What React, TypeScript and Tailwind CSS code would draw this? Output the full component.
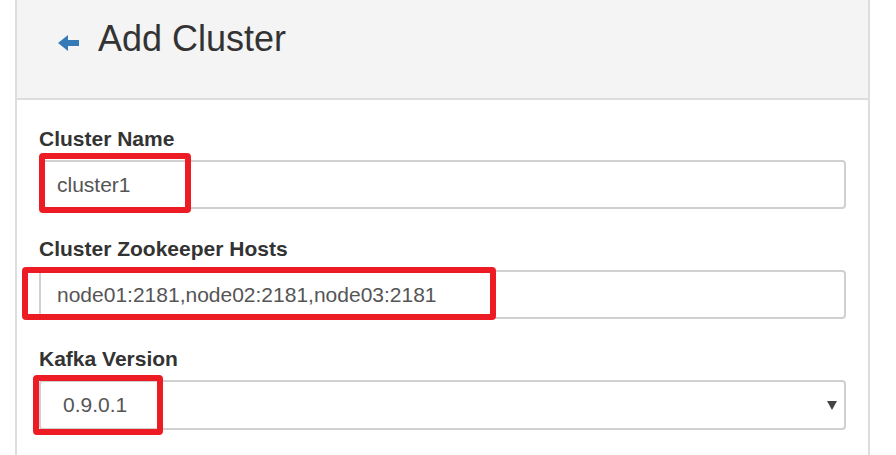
import React from "react";

const fields = [
  {
    label: "Cluster Name",
    value: "cluster1",
    mark: "left-0 top-[-7px] w-[152px] h-[60px]",
  },
  {
    label: "Cluster Zookeeper Hosts",
    value: "node01:2181,node02:2181,node03:2181",
    mark: "left-[-17px] top-[-3px] w-[474px] h-[53px]",
  },
];

function Mark({ className }: { className: string }) {
  return (
    <div
      className={`pointer-events-none absolute rounded-[4px] border-[6px] border-[#ed1c24] ${className}`}
    />
  );
}

export default function App() {
  return (
    <div className="h-[455px] w-[896px] overflow-hidden bg-white font-['Liberation_Sans',Arial,sans-serif] text-[#333]">
      <div className="ml-[15px] h-full w-[855px] border-x-2 border-[#ddd]">
        {/* Header */}
        <div className="flex h-[100px] items-start gap-[19px] border-b-2 border-[#ddd] bg-[#f4f4f4] pl-[41px] pt-[19px]">
          <svg
            viewBox="0 0 21 16"
            className="mt-[16px] h-[16px] w-[21px] shrink-0 fill-[#337ab7]"
            aria-hidden="true"
          >
            <polygon points="0,8 10,0 10,5 21,5 21,11 10,11 10,16" />
          </svg>
          <h1 className="text-[36px] leading-[40px] font-normal">Add Cluster</h1>
        </div>

        {/* Form */}
        <div className="px-[22px] pt-[25px]">
          {fields.map((f) => (
            <div key={f.label} className="mb-[26px]">
              <label className="mb-[7px] block text-[21px] leading-[28px] font-bold">
                {f.label}
              </label>
              <div className="relative">
                <input
                  readOnly
                  value={f.value}
                  className="block h-[49px] w-full rounded-[4px] border-2 border-[#d0d0d0] bg-white pl-[16px] text-[21px] text-[#555] outline-none"
                />
                <Mark className={f.mark} />
              </div>
            </div>
          ))}

          <div>
            <label className="mb-[7px] block text-[21px] leading-[28px] font-bold">
              Kafka Version
            </label>
            <div className="relative">
              <div className="flex h-[50px] w-full items-center justify-between rounded-[4px] border-2 border-[#d0d0d0] bg-white pl-[22px] pr-[7px] text-[21px] text-[#555]">
                <span>0.9.0.1</span>
                <svg viewBox="0 0 10 9" className="h-[9px] w-[10px] fill-[#444]" aria-hidden="true">
                  <polygon points="0,0 10,0 5,9" />
                </svg>
              </div>
              <Mark className="left-[-6px] top-[-5px] w-[130px] h-[60px]" />
            </div>
          </div>
        </div>
      </div>
    </div>
  );
}
